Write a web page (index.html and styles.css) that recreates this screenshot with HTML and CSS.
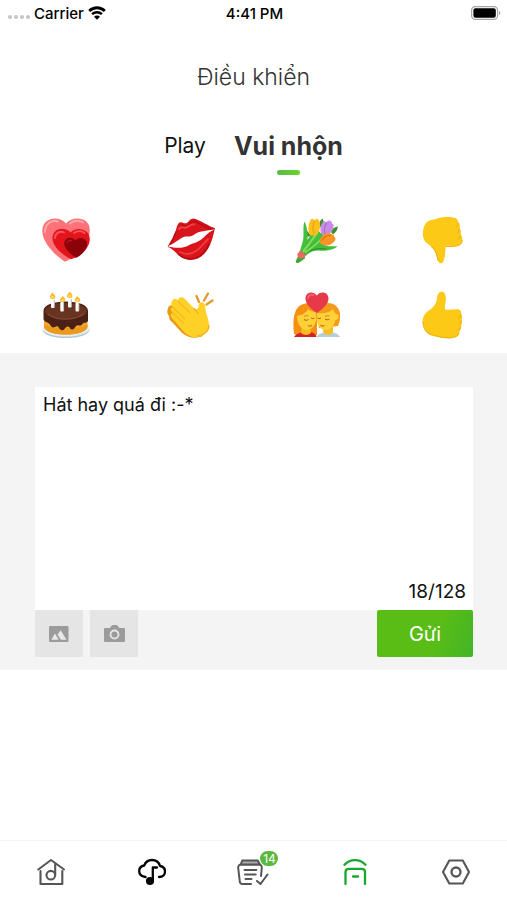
FILE: index.html
```html
<!DOCTYPE html>
<html lang="vi">
<head>
<meta charset="utf-8">
<meta name="viewport" content="width=device-width, initial-scale=1">
<title>Điều khiển</title>
<link rel="stylesheet" href="styles.css">
</head>
<body>
<div class="app">
  <div class="status">
    <div class="status-left">
      <span class="signal"><i></i><i></i><i></i><i></i></span>
      <span>Carrier</span>
      <svg class="wifi" viewBox="0 0 18 14" aria-hidden="true">
        <path d="M1.200 4.900a11.200 11.200 0 0 1 15.600 0" fill="none" stroke="#000" stroke-width="2.800"/>
        <path d="M4.100 8.200a7 7 0 0 1 9.800 0" fill="none" stroke="#000" stroke-width="2.400"/>
        <path d="M9 13.800 6 10.800a4.200 4.200 0 0 1 6 0z"/>
      </svg>
    </div>
    <div class="status-time">4:41 PM</div>
    <div class="status-right">
      <svg class="battery" viewBox="0 0 30 14" aria-hidden="true">
        <rect x=".6" y=".6" width="26" height="12.8" rx="3.6" fill="#fff" stroke="#a5a5a5" stroke-width="1.2"/>
        <rect x="2.4" y="2.2" width="22.4" height="9.6" rx="2"/>
        <path d="M28 5c1.800.6 1.800 3.400 0 4z" fill="#a5a5a5"/>
      </svg>
    </div>
  </div>

  <h1 class="title">Điều khiển</h1>

  <div class="tabs" role="tablist">
    <button class="tab" type="button" role="tab" aria-selected="false">Play</button>
    <button class="tab tab-active" type="button" role="tab" aria-selected="true">Vui nhộn</button>
  </div>

  <div class="emojis">
    <button class="emoji" type="button" aria-label="Trái tim">
      <svg viewBox="0 0 48 48">
        <path d="M23 45.700C14 40 .3 27 .3 15 .3 1.500 17-1 24 7.500 31-.5 47.800 1 47.800 14c0 12-12 26-24.800 31.700z" fill="#fb7278"/>
        <path d="M3 16C3 7 10 3.500 16 5.500M28 7.500c4-3.500 10-3.500 13-1" fill="none" stroke="#ffa5a6" stroke-width="2.200" stroke-linecap="round"/>
        <path d="M29 43.300C21 39 10.500 31 10.500 22c0-10 12.500-12 18-5.500 5.500-6.500 19.300-4 19.300 6.500 0 9-9 17.500-18.800 20.300z" fill="#e3141c"/>
        <path d="M13 22c0-5 5-7.500 9-5.500M32 17c3-2.500 8-2.500 10.500 0" fill="none" stroke="#fa5458" stroke-width="1.800" stroke-linecap="round"/>
        <path d="M34.500 41.700C29 39 22.300 33 22.300 27.500c0-6.500 8-7.500 11.200-3 3.200-4.500 11.500-3 11.500 3.500 0 5.500-5 11-10.500 13.700z" fill="#8c0209"/>
        <path d="M25 27c.5-2 2.500-3 4.500-2.500" fill="none" stroke="#b5151b" stroke-width="1.300" stroke-linecap="round"/>
      </svg>
    </button>
    <button class="emoji" type="button" aria-label="Nụ hôn">
      <svg viewBox="0 0 48 48">
        <path d="M1.300 30.700C4 25 7 20 9 14c1-4.500 2.500-8 5-7.800 2 .3 3.500 1.300 5.500 1 2-1.500 4-5 7-4.800C34 4 41 10 48 12c-2 9-4 17-8.500 23C35 42 27 45 20 43.500 12 42 9 35 1.300 30.700z" fill="#d9151b"/>
        <path d="M9 16C7 22 4 27 1.500 30.500M15 9c3 1.500 5 1.500 7-.5s4-4.500 7-3c5 3 11 6.500 17 8" fill="none" stroke="#b80d14" stroke-width="1.500" stroke-linecap="round"/>
        <path d="M12 13c2-3 4-1 7-1.500 3-1 5-4 8-3" fill="none" stroke="#f0484a" stroke-width="1.800" stroke-linecap="round"/>
        <path d="M2 29.500C9 27 13 21.500 18.500 20.500c3-.3 5 .5 8-1.500 5-4 13-4.500 21.500-5.500-6 2-8.500 5.500-13 9.500-5 4-10 4-14.500 7-5 2.500-12 2-19.500.5z" fill="#fff"/>
        <path d="M13 36c6 3 12 2 16-1 5-3.500 8-8 12-12" fill="none" stroke="#f03a3e" stroke-width="1.800" stroke-linecap="round"/>
        <path d="M11 38c7 6 16 6 22 2 4-3 7-7 9-12" fill="none" stroke="#aa0b12" stroke-width="1.300"/>
      </svg>
    </button>
    <button class="emoji" type="button" aria-label="Bó hoa">
      <svg viewBox="0 0 48 48">
        <path d="M26 10c0-3 1-6 3.500-7.500 2 3 1 7-1 9zM38 16c1-3 3-5 7-5.500-.5 3-2 6-5 8zM15 21c-2-2-2-5-1-6l4 4z" fill="#3e8e2c"/>
        <path d="M6 40C7 32 10 28 10.500 20c0-6-.5-10 1-14.500C14 10 15 17 14.500 24c3-5 5-9 10-11l3 4c4-1 8 2 5 6l-3 5c5 3 9 2 15 2.500-5 4-14 5-20 4-7 0-11 5-15 8z" fill="#45bd3d"/>
        <path d="M9 38c4-7 7-14 14-19M10 39c6-7 11-12 19-16M12 38c5-4 13-6 22-5" fill="none" stroke="#2d982c" stroke-width="1.200"/>
        <path d="m10 36 14-19M12 37l18-15" stroke="#7ddd58" stroke-width="2.200"/>
        <path d="M16 18C14.500 11 16 5 19 2.500c1 .3 2 1 2.500 2C22.500 3 24 2.500 25 3c3 4 3 10-.5 15-2.500 2-6 2-8.500 0z" fill="#fbc01e"/>
        <path d="M21.500 5c-2 4-2 9-.5 13" fill="none" stroke="#e9a10e" stroke-width="1.100"/>
        <path d="M28 17c-1.500-5 0-9 2.500-11.500 1-.5 2 0 3 .5 1-1.500 3-2 4-1 1.500.5 1.500 2 1.500 2.500 1.500.5 2 1.500 1.500 3-1 5-4 8.500-8 9-2 0-3.500-1-4.500-2.500z" fill="#c88be9"/>
        <path d="M34 7c-3 3-3 7-2 11" fill="none" stroke="#a969cc" stroke-width="1.100"/>
        <path d="M27 26c-.5-4 3-8 7.500-9 1.500-.3 2.500 0 3.500 1 2 0 3 1 3 2.500 1.500.8 2 2.500 1 4-3 5-9 6-13 4-1.200-.6-1.800-1.500-2-2.500z" fill="#fa9426"/>
        <path d="M38 19c-4 0-7 2-10 6" fill="none" stroke="#da7015" stroke-width="1.100"/>
        <path d="m6.500 37 6 5-5.500 4c-2 2-5 1-4-1.500z" fill="#43a832"/>
        <path d="m7 34.500 6 4.500c-1 2-3 3.500-6 3.500-2-1-3-3-2.500-5 1-.8 1.800-1.800 2.500-3z" fill="#ef6765"/>
      </svg>
    </button>
    <button class="emoji" type="button" aria-label="Không thích">
      <svg viewBox="0 0 48 48">
        <path d="M23.500 47.300c-3 .2-4-2.500-4.500-6-.7-4-2-8-5.500-10.800C10 28 6.500 26 5.300 21.500 4 16 5.500 9 9.500 5.500 12 3.500 15 4 18 3 23 1 30 .7 35 1.500c3.500.5 5.500 2.500 5.200 5.300 2 1.200 2.300 3.700 1 5.700 2 1.500 2.300 4.200 1 6 2 1.500 2.500 3.500 2 6-.5 3.500-3 5.500-6 5.500-3.500 0-6-.5-9-.3-1.200 0-1.700 1-1.700 2.500 0 5-1 14.500-4 15.100z" fill="#fcca16"/>
        <path d="M40.200 6.800c.2 1.700-.5 3-2 4M41.200 12.500c.3 2-.5 3.500-2 4.500M42.200 18.500c.3 2-.5 3.500-2 4.500M28 30.500c3-.5 8 .6 12-1 2.500-1 4-2.500 4.200-5M13.500 30.500C18 33.500 19 39 20 44" fill="none" stroke="#f2b41a" stroke-width="1.200" stroke-linecap="round"/>
      </svg>
    </button>
    <button class="emoji" type="button" aria-label="Bánh kem">
      <svg viewBox="0 0 48 48">
        <ellipse cx="24" cy="39" rx="23.500" ry="8" fill="#b5c7d1"/>
        <ellipse cx="24" cy="38" rx="23.300" ry="7.500" fill="#e6eff4"/>
        <path d="M2 22h43.500v14c-1 10-42.500 10-43.500 0z" fill="#f5a72a"/>
        <path d="M2 36c3 6 12 7.500 22 7.500S43 42 45.500 36v-3c-3 5-39 6-43.500 0z" fill="#eb9a20"/>
        <path d="M1.500 20c0-6 10-9.500 22.500-9.500S46 14 46 20v10c-1.500 2.500-3.500 1-5 2.500s-2 2.500-4 2-2.500 0-4.500 2.500-4 1.500-5-.5-3.500-1-5 1.500-4.500 1-5.500-1-2.500-2-4-1-3.500.5-4.500-1.500-2-2.500-3-3c-2-.5-4-2-4-3.500z" fill="#4b2115"/>
        <ellipse cx="23.800" cy="20" rx="21" ry="8" fill="#683321"/>
        <path d="M6 23c9 7 27 7 37-1" fill="none" stroke="#85482e" stroke-width="1.200"/>
        <g fill="#fff"><rect x="9" y="7.500" width="3.600" height="9.500" rx="1"/><rect x="18.300" y="11" width="3.600" height="9.500" rx="1"/><rect x="26" y="7" width="3.600" height="9.500" rx="1"/><rect x="33.500" y="11" width="3.600" height="9.500" rx="1"/></g>
        <g stroke="#b9a49d" stroke-width=".8"><path d="M12.300 9v7M21.600 12v7.500M29.300 8v7.500M36.800 12v7.500"/></g>
        <g fill="#f9ba25"><path d="M10 1.500c1.500 1 3.700 3 3.300 5-.4 2.200-4.300 2.200-5.100 0-.5-1.800 1-3.500 1.800-5zM20.500 5c1.500 1 3 3 2.700 4.600-.4 2.200-4.600 2.200-5.300 0C17.500 8 19.500 7 20.500 5zM27.500.7c1.500 1 3.300 3 2.900 4.800-.4 2.200-4.600 2.200-5.300 0-.5-1.800 1.600-3.300 2.400-4.800zM35 5c1.500 1 3.500 3 3.200 4.600-.4 2.200-4.700 2.200-5.500 0C32.300 8 34 7 35 5z"/></g>
        <g fill="#ffe575"><circle cx="10.600" cy="6" r="1.200"/><circle cx="20.500" cy="9.300" r="1.200"/><circle cx="27.800" cy="5" r="1.200"/><circle cx="35.400" cy="9.300" r="1.200"/></g>
      </svg>
    </button>
    <button class="emoji" type="button" aria-label="Vỗ tay">
      <svg viewBox="0 0 48 48">
        <path d="M2 15c-2 4-2.500 7 0 10 0 4 2 5 4 7l9 10c6 5 14 6 21 3L12 12z" fill="#e99b17"/>
        <path d="M5 10c2-3.500 5-2.500 6 0 0-4 4-5 7-2l9 9.500c1.500 1 3 1 4 0 1-4 1.500-7 5-6 2.500 1 2 4 2.500 7 .5 5 3.500 10 3.500 16 0 5-4 9-9 11-6 2-10.500 0-15.500-4L5 27c-2-2-1.500-4.500.5-5.500C3 19 3.500 17 5.500 16 4 14 4 12 5 10z" fill="#ffd025"/>
        <path d="m11 10 12 12M5.500 16 18 28M5.500 21.500 16 32" fill="none" stroke="#f4b91e" stroke-width="1.100" stroke-linecap="round"/>
        <path d="M27 17.500c2 1.500 3 3 4 5M42 34.500c0 5.500-5 10-12 10.500" fill="none" stroke="#f0ad18" stroke-width="1.200" stroke-linecap="round"/>
        <path d="m29.500 5 2.500 6M41 2.500l-4 7M45.500 9.500l-6 4" fill="none" stroke="#e39a28" stroke-width="2.300" stroke-linecap="round"/>
      </svg>
    </button>
    <button class="emoji" type="button" aria-label="Cặp đôi">
      <svg viewBox="0 0 48 48">
        <path d="M1 43C-.5 30 .5 18 8 14c8-4 14-.5 16 5v25c-7 2-17 2-23-1z" fill="#f78f13"/>
        <path d="M23 22c0-7 5-10 11-10 9 0 14 6 13 15 0 3-1 5-2 8l-19 2z" fill="#f59919"/>
        <path d="M1 46c2-3 5-4 9-5h8c3 1 5 2.500 5.500 5z" fill="#d91f26"/>
        <path d="M23.500 46c2-3 5-4 9-5h6c4 1 7 2 8.500 5z" fill="#b7cddd"/>
        <path d="M9 35h8l1 7c-3 2.500-7 2.500-10 0zM31 34h9v7c-2 4-7 4-10 0z" fill="#f4bd20"/>
        <path d="M4 25c5-1 9-3 11-7 2 2 5 3 8 3v9c-1 5-5 9-9.500 9C8 38 4 33 4 25z" fill="#ffd137"/>
        <path d="M24 22c7 1 12 0 16-4 1 3 2 4 3 5 1.500 0 3 1 2.500 3-.3 2-1.500 3-3 3-1 5-4 10-9.500 10S24 34 23.500 28z" fill="#ffd137"/>
        <path d="M11 28.500c1.500 1 3 1 4.500 0M18 27c1 .8 2.500.8 3.500 0M24.500 27c1 .8 2 .8 3.500 0M32 28c1.500 1 3 1 4.500 0" fill="none" stroke="#8e631b" stroke-width="1"/>
        <path d="M11 25.500c1.500-1 3-1 4.500-.5M32 25.500c1.500-1 3-1 4.500-.5" fill="none" stroke="#b98221" stroke-width=".9"/>
        <path d="M15 34.500c1.500 1 3 .5 4-.5M27.500 34c1 1 2.500 1.500 4 .5" fill="none" stroke="#d0721c" stroke-width="1.100"/>
        <path d="M23.800 22C18 18 12.500 13 12.500 7.500c0-7 8-8 11.300-3 3.300-5 11.700-4 11.700 3C35.500 13 30 18 23.800 22z" fill="#e6394a"/>
        <path d="M15 7c.5-2.500 3-4 5.500-3" fill="none" stroke="#f36b76" stroke-width="1.500" stroke-linecap="round"/>
      </svg>
    </button>
    <button class="emoji" type="button" aria-label="Thích">
      <svg viewBox="0 0 48 48">
        <path d="M23.500.7c3-.2 4.200 2.500 4.300 6 .2 4-1 8-1 10 0 1.500.7 2 2 2l10-.5c3.500 0 5 2 4.200 5 1.300 1.200 1.500 4 .2 5.700 1.300 1.800 1 4.500-.5 6 .8 2-.2 4.500-1.500 5.500.3 4-3 6-6.500 6.600-5 .7-11 .3-16-1.200-3-.8-6-1-8.500-3C5.500 39 4 33 5 27.500c1-5 4.500-7 8-9.500 4-3 5.500-7 6-11 .4-3.500 1.500-6.100 4.500-6.300z" fill="#fcca16"/>
        <path d="M43 23.300c.2 2-.8 3.500-2.500 4.200M43.200 29c.2 2-.8 3.500-2.500 4.200M42.700 35c0 2-1 3.200-2.700 4M5 31c0 7 4 12 10 13 6 1.500 13 4 20 2.500 3-.5 5.500-2.500 6-5" fill="none" stroke="#f2b41a" stroke-width="1.200" stroke-linecap="round"/>
      </svg>
    </button>
  </div>

  <form class="composer">
    <div class="message">
      <textarea class="message-text" aria-label="Tin nhắn" maxlength="128">Hát hay quá đi :-*</textarea>
      <div class="counter">18/128</div>
    </div>
    <div class="actions">
      <button class="attach" type="button" aria-label="Chọn ảnh">
        <svg viewBox="0 0 20 16"><rect width="19.500" height="16" rx="1.200" fill="#9b9b9b"/><path d="M2.300 13.700 6 7.500l2.200 3.800 1.500 2.400zM8.600 8.500 11.700 4.200l5.800 9.500h-5.700z" fill="#e8e8e8"/></svg>
      </button>
      <button class="attach attach-camera" type="button" aria-label="Chụp ảnh">
        <svg viewBox="0 0 21 18"><path d="M1 3h4.800l1.500-2q.7-1 1.800-1h3q1.100 0 1.800 1l1.500 2H20q1 0 1 1v12q0 1-1 1H1q-1 0-1-1V4q0-1 1-1z" fill="#9b9b9b"/><circle cx="10.500" cy="9.500" r="4" fill="#9b9b9b" stroke="#e6e6e6" stroke-width="1.800"/></svg>
      </button>
      <button class="send" type="submit">Gửi</button>
    </div>
  </form>

  <nav class="nav">
    <a class="nav-item" href="#home" aria-label="Trang chủ">
      <svg viewBox="0 0 28 28" fill="none" stroke="#555" stroke-width="2.100" stroke-linecap="round" stroke-linejoin="round">
        <path d="M1.300 11.500 14 2l13 9.500M3.500 13v13h21.800V13"/><path d="M18.200 6v11"/><circle cx="13.800" cy="17.200" r="4.300"/>
      </svg>
    </a>
    <a class="nav-item" href="#songs" aria-label="Bài hát">
      <svg viewBox="0 0 28 28" fill="none" stroke="#050505" stroke-width="2.300" stroke-linecap="round" stroke-linejoin="round">
        <path d="M7.500 19C3.500 18.500 1.200 16 1.200 13c0-3 2-5 5-5.500C7.500 4 10.500 2 14 2c4 0 7 2.500 8 6 3 .5 5 2.500 5 5.500 0 3-2 5.500-6 5.500"/><path d="M19 9.500h-4.200V22"/><circle cx="12" cy="23" r="2.900" fill="#050505"/>
      </svg>
    </a>
    <a class="nav-item" href="#queue" aria-label="Danh sách">
      <span class="nav-badge-wrap">
        <svg viewBox="0 0 34 28" fill="none" stroke="#555" stroke-width="2" stroke-linecap="round" stroke-linejoin="round">
          <path d="M15 26H6.500Q4 26 3.800 23.500L2.200 10Q2 6.500 5.500 6.500h17q3.500 0 3.300 3.500L25 18"/><path d="m4.700 6.500 1.500-4h15.600l2 4z" fill="#aaa"/><path d="M8.500 12h11.800M9 16.500h10.700M9.500 21h6M21 23l3.500 3L31.500 16.500"/>
        </svg>
        <span class="badge">14</span>
      </span>
    </a>
    <a class="nav-item" href="#control" aria-label="Điều khiển" aria-current="page">
      <svg viewBox="0 0 28 28" fill="none" stroke="#18a82b" stroke-width="2.300" stroke-linecap="round" stroke-linejoin="round">
        <path d="M3.500 6.800C9 .5 19 .5 24.500 6.800"/><path d="M4.500 26V14Q4.500 10.800 8 10.800h12.500q3.500 0 3.500 3.200v12"/><path d="M12 18.500h5"/>
      </svg>
    </a>
    <a class="nav-item" href="#settings" aria-label="Cài đặt">
      <svg viewBox="0 0 28 28" fill="none" stroke="#555" stroke-width="2.100" stroke-linecap="round" stroke-linejoin="round">
        <path d="M7.300 2.500h13.500L27 14l-6.200 11.500H7.300L1 14z"/><circle cx="14" cy="14" r="4.500" stroke-width="2.300"/>
      </svg>
    </a>
  </nav>
</div>
</body>
</html>
```
FILE: styles.css
```css
* {
  box-sizing: border-box;
}

body {
  margin: 0;
  background: #fff;
  color: #111;
  font-family: Inter, "Liberation Sans", sans-serif;
}

button,
textarea {
  font: inherit;
  color: inherit;
  border: 0;
  padding: 0;
  margin: 0;
  background: none;
}

svg {
  display: block;
}

.app {
  min-height: 100vh;
  display: flex;
  flex-direction: column;
}

.status {
  display: grid;
  grid-template-columns: 1fr auto 1fr;
  align-items: center;
  height: 26px;
  padding: 0 6px 0 8px;
  font-size: 15px;
  font-weight: 500;
  color: #000;
}

.status-left {
  display: flex;
  align-items: center;
  gap: 4px;
}

.signal {
  display: flex;
  gap: 2px;
  padding-top: 8px;
}

.signal i {
  width: 4px;
  height: 4px;
  border-radius: 50%;
  background: #c4c4c4;
}

.wifi {
  width: 18px;
  height: 14px;
}

.battery {
  width: 30px;
  height: 14px;
  margin-left: auto;
}

.title {
  margin: 36px 0 0;
  font-size: 23px;
  line-height: 30px;
  font-weight: 300;
  color: #333;
  text-align: center;
}

.tabs {
  display: flex;
  justify-content: center;
  align-items: center;
  gap: 28px;
  margin-top: 36px;
}

.tab {
  font-size: 21px;
  line-height: 36px;
  color: #111;
}

.tab-active {
  position: relative;
  font-size: 25px;
  font-weight: 700;
  color: #333;
}

.tab-active::after {
  content: "";
  position: absolute;
  left: 50%;
  bottom: -11px;
  width: 23px;
  height: 5px;
  margin-left: -11px;
  border-radius: 3px;
  background: linear-gradient(90deg, #59b947, #6bd52b);
}

.emojis {
  display: grid;
  grid-template-columns: repeat(4, 1fr);
  justify-items: center;
  row-gap: 27px;
  padding: 52px 2px 14px 3px;
}

.emoji svg {
  width: 48px;
  height: 48px;
}

.composer {
  padding: 34px 34px 13px 35px;
  background: #f4f4f4;
}

.message {
  display: flex;
  flex-direction: column;
  height: 223px;
  background: #fff;
}

.message-text {
  display: block;
  flex: 1;
  width: 100%;
  padding: 6px 8px;
  font-size: 18px;
  line-height: 24px;
  resize: none;
  outline: 0;
}

.counter {
  padding: 0 7px 6px;
  font-size: 19px;
  line-height: 24px;
  text-align: right;
}

.actions {
  display: flex;
  gap: 7px;
}

.attach {
  display: grid;
  place-items: center;
  width: 48px;
  height: 47px;
  background: #e5e5e5;
}

.attach svg {
  width: 20px;
  height: 16px;
}

.attach-camera svg {
  width: 21px;
  height: 18px;
}

.send {
  width: 96px;
  height: 47px;
  margin-left: auto;
  border-radius: 2px;
  background: linear-gradient(110deg, #5abd16 60%, #42b526);
  color: #fff;
  font-size: 20px;
}

.nav {
  display: grid;
  grid-template-columns: repeat(5, 1fr);
  height: 60px;
  margin-top: auto;
  border-top: 1px solid #f3f3f3;
}

.nav-item {
  display: grid;
  place-items: center;
  padding-top: 2px;
}

.nav-item svg {
  width: 28px;
  height: 28px;
}

.nav-badge-wrap {
  position: relative;
}

.nav-badge-wrap svg {
  width: 34px;
}

.badge {
  position: absolute;
  top: -7px;
  right: -8px;
  width: 18px;
  height: 15px;
  border-radius: 8px;
  background: #5ab83e;
  color: #fff;
  font-size: 12px;
  line-height: 15px;
  text-align: center;
}
```
